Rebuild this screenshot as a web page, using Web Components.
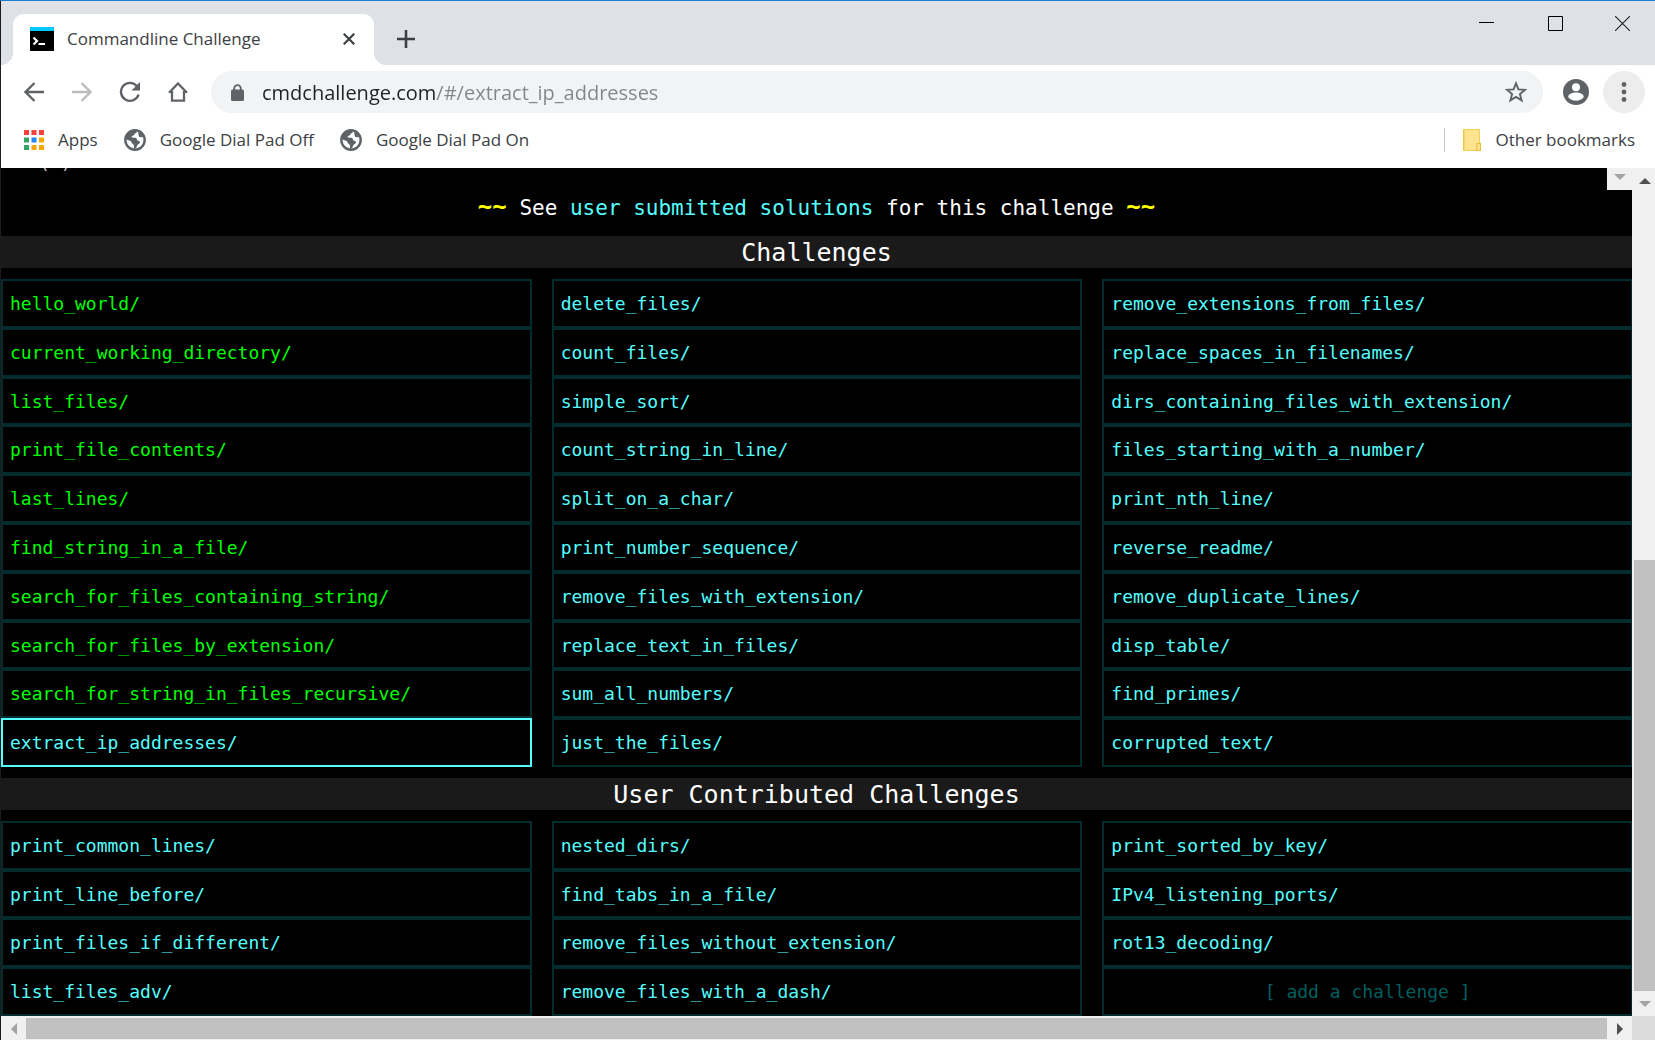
<!DOCTYPE html>
<html lang="en">
<head>
<meta charset="utf-8">
<title>Commandline Challenge</title>
<style>
  html, body { height: 100%; margin: 0; }
  body { font-family: "Open Sans", "Noto Sans", sans-serif; font-size: 18px; color: #3c4043; overflow: hidden; }
</style>
</head>
<body>
<browser-window>
  <tab-strip slot="tabs"><browser-tab>Commandline Challenge</browser-tab></tab-strip>
  <nav-toolbar slot="toolbar"></nav-toolbar>
  <bookmarks-bar slot="bookmarks">
    <bookmark-item icon="apps">Apps</bookmark-item>
    <bookmark-item icon="globe">Google Dial Pad Off</bookmark-item>
    <bookmark-item icon="globe">Google Dial Pad On</bookmark-item>
    <bookmark-item icon="folder" slot="end">Other bookmarks</bookmark-item>
  </bookmarks-bar>
  <challenge-page>
    <solutions-note slot="note"></solutions-note>
    <section-title>Challenges</section-title>
    <challenge-list rows="10">
      <challenge-link done>hello_world/</challenge-link>
      <challenge-link done>current_working_directory/</challenge-link>
      <challenge-link done>list_files/</challenge-link>
      <challenge-link done>print_file_contents/</challenge-link>
      <challenge-link done>last_lines/</challenge-link>
      <challenge-link done>find_string_in_a_file/</challenge-link>
      <challenge-link done>search_for_files_containing_string/</challenge-link>
      <challenge-link done>search_for_files_by_extension/</challenge-link>
      <challenge-link done>search_for_string_in_files_recursive/</challenge-link>
      <challenge-link current>extract_ip_addresses/</challenge-link>
      <challenge-link>delete_files/</challenge-link>
      <challenge-link>count_files/</challenge-link>
      <challenge-link>simple_sort/</challenge-link>
      <challenge-link>count_string_in_line/</challenge-link>
      <challenge-link>split_on_a_char/</challenge-link>
      <challenge-link>print_number_sequence/</challenge-link>
      <challenge-link>remove_files_with_extension/</challenge-link>
      <challenge-link>replace_text_in_files/</challenge-link>
      <challenge-link>sum_all_numbers/</challenge-link>
      <challenge-link>just_the_files/</challenge-link>
      <challenge-link>remove_extensions_from_files/</challenge-link>
      <challenge-link>replace_spaces_in_filenames/</challenge-link>
      <challenge-link>dirs_containing_files_with_extension/</challenge-link>
      <challenge-link>files_starting_with_a_number/</challenge-link>
      <challenge-link>print_nth_line/</challenge-link>
      <challenge-link>reverse_readme/</challenge-link>
      <challenge-link>remove_duplicate_lines/</challenge-link>
      <challenge-link>disp_table/</challenge-link>
      <challenge-link>find_primes/</challenge-link>
      <challenge-link>corrupted_text/</challenge-link>
    </challenge-list>
    <section-title>User Contributed Challenges</section-title>
    <challenge-list rows="4">
      <challenge-link>print_common_lines/</challenge-link>
      <challenge-link>print_line_before/</challenge-link>
      <challenge-link>print_files_if_different/</challenge-link>
      <challenge-link>list_files_adv/</challenge-link>
      <challenge-link>nested_dirs/</challenge-link>
      <challenge-link>find_tabs_in_a_file/</challenge-link>
      <challenge-link>remove_files_without_extension/</challenge-link>
      <challenge-link>remove_files_with_a_dash/</challenge-link>
      <challenge-link>print_sorted_by_key/</challenge-link>
      <challenge-link>IPv4_listening_ports/</challenge-link>
      <challenge-link>rot13_decoding/</challenge-link>
      <challenge-link add>[ add a challenge ]</challenge-link>
    </challenge-list>
  </challenge-page>
</browser-window>

<script>
const define = (name, html, setup) => customElements.define(name, class extends HTMLElement {
  constructor() {
    super();
    const t = document.createElement('template');
    t.innerHTML = '<style>*{box-sizing:border-box}button{font:inherit;border:0;padding:0;margin:0;background:none;color:inherit;display:grid;place-items:center}svg{display:block}</style>' + html;
    this.attachShadow({ mode: 'open' }).append(t.content.cloneNode(true));
  }
  connectedCallback() { if (setup) setup(this, this.shadowRoot); }
});

define('browser-window', `
  <style>
    :host { display: flex; flex-direction: column; height: 100vh; box-sizing: border-box;
      border-top: 1px solid #1a7fd4; border-left: 1px solid #1c1c1c; background: #fff; }
    main { flex: 1; min-height: 0; display: grid; grid-template-columns: minmax(0, 1fr) 23px;
      grid-template-rows: minmax(0, 1fr) 24px; background: #dcdcdc; position: relative; }
    .corner { position: absolute; top: 0; right: 23px; width: 25px; height: 22px; padding-bottom: 4px; background: #f0f0f0; display: grid; place-items: center; }
  </style>
  <slot name="tabs"></slot>
  <slot name="toolbar"></slot>
  <slot name="bookmarks"></slot>
  <main>
    <slot></slot>
    <scroll-rail></scroll-rail>
    <scroll-rail horizontal></scroll-rail>
    <div class="corner"><svg width="12" height="6" viewBox="0 0 12 6"><path d="M0 0h12L6 6z" fill="#a3a3a3"/></svg></div>
  </main>`);

define('tab-strip', `
  <style>
    :host { display: flex; align-items: flex-end; height: 64px; background: #dee1e6; flex: none; padding-left: 12px; box-sizing: border-box; }
    .new { width: 64px; height: 51px; padding-bottom: 2px; }
    .controls { margin-left: auto; align-self: flex-start; display: flex; }
    .controls button { width: 69px; height: 44px; }
    .controls button:last-child { width: 65px; }
  </style>
  <slot></slot>
  <button class="new" aria-label="New tab"><svg width="18" height="18" viewBox="0 0 18 18"><path d="M9 0v18M0 9h18" stroke="#3c4043" stroke-width="2.6"/></svg></button>
  <div class="controls">
    <button aria-label="Minimize"><svg width="15" height="15" viewBox="0 0 15 15"><path d="M0 6.5h15" stroke="#000"/></svg></button>
    <button aria-label="Maximize"><svg width="15" height="15" viewBox="0 0 15 15"><path d="M.5.5h14v14H.5z" fill="none" stroke="#000"/></svg></button>
    <button aria-label="Close"><svg width="15" height="15" viewBox="0 0 15 15"><path d="M0 0l15 15M15 0L0 15" stroke="#222" stroke-width="1.1"/></svg></button>
  </div>`);

define('browser-tab', `
  <style>
    :host { display: flex; align-items: center; position: relative; width: 361px; height: 51px; box-sizing: border-box;
      padding: 0 14px 2px 17px; background: #fff; border-radius: 11px 11px 0 0; }
    :host::before, :host::after { content: ""; position: absolute; bottom: 0; width: 12px; height: 12px; }
    :host::before { left: -12px; background: radial-gradient(circle at 0 0, transparent 12px, #fff 12px); }
    :host::after { right: -12px; background: radial-gradient(circle at 100% 0, transparent 12px, #fff 12px); }
    span { flex: 1; margin-left: 13px; white-space: nowrap; font-size: 17px; }
    button { width: 22px; height: 22px; }
  </style>
  <svg width="24" height="24" viewBox="0 0 24 24"><path d="M0 0h24v24H0z"/><path d="M0 0h24v4H0z" fill="#00c8ff"/><path d="M3.500 10.500l3.500 3.500-3.500 3.500M8.500 17h6.500" fill="none" stroke="#fff" stroke-width="2.200"/></svg>
  <span><slot></slot></span>
  <button aria-label="Close tab"><svg width="12" height="12" viewBox="0 0 12 12"><path d="M.7.700l10.600 10.600M11.300.700L.7 11.300" stroke="#3c4043" stroke-width="2.200"/></svg></button>`);

define('nav-toolbar', `
  <style>
    :host { display: flex; align-items: center; height: 54px; flex: none; padding: 0 10px 0 9px; background: #fff; box-sizing: border-box; }
    button { width: 48px; height: 42px; }
    .omni { flex: 1; display: flex; align-items: center; height: 42px; border-radius: 21px; background: #f1f3f4; padding-left: 20px; margin: 0 9px; }
    input { flex: 1; min-width: 0; border: 0; outline: 0; padding: 0; height: 42px; margin-left: 18px; font: inherit; font-size: 20px; color: #202124;
      background: linear-gradient(90deg, #202124 173px, #80868b 173px); -webkit-background-clip: text; background-clip: text; -webkit-text-fill-color: transparent; }
    .star { width: 54px; }
    .user { width: 48px; }
    .menu { width: 42px; border-radius: 50%; background: #ededed; margin-left: 3px; }
  </style>
  <button aria-label="Back"><svg width="20" height="20" viewBox="0 0 20 20"><path d="M10.500 1L1.500 10l9 9M1.500 10H20" fill="none" stroke="#5f6368" stroke-width="2.300"/></svg></button>
  <button aria-label="Forward"><svg width="20" height="20" viewBox="0 0 20 20"><path d="M9.500 1l9 9-9 9M18.500 10H0" fill="none" stroke="#babcbe" stroke-width="2.300"/></svg></button>
  <button aria-label="Reload"><svg width="22" height="22" viewBox="0 0 22 22"><path d="M18 5.200A9 9 0 1 0 19.600 13.500" fill="none" stroke="#5f6368" stroke-width="2.400"/><path d="M21 1v8.500h-8.500z" fill="#5f6368"/></svg></button>
  <button aria-label="Home"><svg width="20" height="20" viewBox="0 0 20 20"><path d="M1 10.800L10 1.500l9 9.300M4 9v9.700h12V9" fill="none" stroke="#5f6368" stroke-width="2.300"/></svg></button>
  <div class="omni">
    <svg width="13" height="17" viewBox="0 0 13 17"><path d="M3.200 7V4.500a3.300 3.300 0 0 1 6.600 0V7" fill="none" stroke="#5f6368" stroke-width="1.800"/><rect y="5.500" width="13" height="11.500" rx="1.500" fill="#5f6368"/></svg>
    <input aria-label="Address" value="cmdchallenge.com/#/extract_ip_addresses" spellcheck="false">
    <button class="star" aria-label="Bookmark this page"><svg width="22" height="22" viewBox="0 0 24 24"><path d="M12 2.500l2.700 6.600 7.100.500-5.500 4.600 1.800 7-6.100-3.800-6.100 3.800 1.800-7-5.500-4.600 7.100-.500z" fill="none" stroke="#5f6368" stroke-width="2.100"/></svg></button>
  </div>
  <button class="user" aria-label="Profile"><svg width="26" height="26" viewBox="0 0 26 26"><circle cx="13" cy="13" r="13" fill="#5f6368"/><circle cx="13" cy="8.200" r="4" fill="#fff"/><path d="M5.200 18c0-6 15.600-6 15.600 0-3.600 5-12 5-15.600 0z" fill="#fff"/></svg></button>
  <button class="menu" aria-label="Menu"><svg width="6" height="20" viewBox="0 0 6 20"><g fill="#5f6368"><circle cx="3" cy="2.500" r="2.400"/><circle cx="3" cy="10" r="2.400"/><circle cx="3" cy="17.500" r="2.400"/></g></svg></button>`);

define('bookmarks-bar', `
  <style>
    :host { display: flex; align-items: center; height: 49px; flex: none; gap: 26px; padding: 0 20px 8px 23px; background: #fff; box-sizing: border-box; }
    .end { margin-left: auto; padding-left: 18px; border-left: 1px solid #c6c9cd; height: 24px; display: flex; align-items: center; }
  </style>
  <slot></slot>
  <div class="end"><slot name="end"></slot></div>`);

const bookmarkIcons = {
  apps: '<svg width="20" height="20" viewBox="0 0 20 20"><path d="M0 0h5v5H0zM7.500 0h5v5h-5zM15 0h5v5h-5z" fill="#f9423a"/><path d="M0 7.500h5v5H0zM0 15h5v5H0z" fill="#34a464"/><path d="M7.500 7.500h5v5h-5z" fill="#2388f5"/><path d="M15 7.500h5v5h-5zM7.500 15h5v5h-5zM15 15h5v5h-5z" fill="#f5a70b"/></svg>',
  globe: '<svg width="22" height="22" viewBox="0 0 22 22"><circle cx="11" cy="11" r="9.700" fill="#fff" stroke="#5f6368" stroke-width="2.400"/><path d="M1.500 10C2 5 6 1 12.500 1.500c.8 1.500-.2 2.600-1.500 3-1 .4-.5 1.600-1.600 2-.8.400-1.900.3-1.800 1.300.1 1.400 2.900.5 4.400 1.300 1.300.7.700 2.500 2 2.700 1.500.2 2.400.8 1.900 2-.5 1.400-2.200 1.300-2.700 2.700-.4 1.500-1 2.800-2.300 3.500-1.500-.5-.5-2.500-1.100-4-.5-1.200-2.300-1.500-2.500-3C7.100 11.500 4 11.500 1.500 10z" fill="#5f6368"/><path d="M14.500 3c-1 1.500.3 2.100.2 3.300-.1 1.300 1 2.100 2.300 1.900 1-.2 2-.2 3.200.8L18 4z" fill="#5f6368"/></svg>',
  folder: '<svg width="18" height="22" viewBox="0 0 18 22"><path d="M.5.500h16v13.500h1v7.500H.5z" fill="#ffe48f" stroke="#f2cf55"/><path d="M.8 1v20" stroke="#efc63f" stroke-width="1.500"/><path d="M13.800 14.500h3.700v7h-3.700z" fill="#ffe082" stroke="#e6bd3c"/></svg>'
};
define('bookmark-item', `
  <style>
    :host { display: block; }
    a { display: flex; align-items: center; gap: 14px; color: #3c4043; text-decoration: none; font-size: 17px; line-height: 24px; white-space: nowrap; }
  </style>
  <a href="#"><slot></slot></a>`, (el, root) => {
  const a = root.querySelector('a');
  if (!a.querySelector('svg')) a.insertAdjacentHTML('afterbegin', bookmarkIcons[el.getAttribute('icon')]);
});

define('challenge-page', `
  <style>
    :host { display: flex; flex-direction: column; gap: 11px; min-width: 0; overflow: hidden; background: #000; color: #fff;
      font-family: "DejaVu Sans Mono", "Liberation Mono", monospace; }
    .top { display: flex; flex-direction: column; height: 68px; flex: none; margin-bottom: -11px; }
    .prompt { height: 4px; overflow: hidden; display: flex; align-items: flex-end; padding-left: 38px; font-size: 18px; line-height: 18px; white-space: pre; color: #ccc; }
  </style>
  <div class="top"><div class="prompt">( )</div><slot name="note"></slot></div>
  <slot></slot>`);

define('solutions-note', `
  <style>
    :host { display: block; flex: 1; text-align: center; font-size: 21px; line-height: 72px; height: 64px; white-space: nowrap; }
    b { font-weight: 700; font-size: 24px; line-height: 1; color: #ff0; }
    a { color: #5ff; text-decoration: none; }
  </style>
  <b>~~</b> See <a href="#">user submitted solutions</a> for this challenge <b>~~</b>`);

define('section-title', `
  <style>
    :host { display: block; flex: none; height: 32px; background: #1a1a1a; }
    h2 { margin: 0; font-size: 25px; font-weight: 400; line-height: 34px; text-align: center; }
  </style>
  <h2><slot></slot></h2>`);

define('challenge-list', `
  <style>
    :host { display: grid; grid-auto-flow: column; grid-auto-columns: minmax(0, 1fr); column-gap: 20px; min-height: 0; margin-right: -1px; }
  </style>
  <slot></slot>`, el => {
  const rows = el.getAttribute('rows');
  el.style.gridTemplateRows = 'repeat(' + rows + ', minmax(0, 1fr))';
  el.style.flex = rows + ' 1 0';
});

define('challenge-link', `
  <style>
    :host { display: grid; --tone: #5ff; --edge: #022c2d; }
    :host([done]) { --tone: #0f0; }
    :host([current]) { --edge: #5ff; }
    :host([add]) { --tone: #005f5f; text-align: center; }
    a { display: block; border: 2px solid var(--edge); padding: 0 7px; font-size: 18px; line-height: 45px; color: var(--tone); text-decoration: none; white-space: nowrap; overflow: hidden; }
  </style>
  <a href="#"><slot></slot></a>`);

define('scroll-rail', `
  <style>
    :host { display: flex; flex-direction: column; background: #f0f0f0; padding-left: 2px; }
    :host([horizontal]) { flex-direction: row; padding: 2px 0 1px; }
    button { flex: none; height: 25px; }
    :host([horizontal]) button { width: 25px; height: auto; }
    .track { flex: 1; display: flex; flex-direction: column; justify-content: flex-end; }
    .thumb { background: #c1c1c1; height: 54%; }
    :host([horizontal]) .thumb { height: 100%; }
  </style>
  <button class="back" aria-label="Scroll back"></button>
  <div class="track"><div class="thumb"></div></div>
  <button class="fwd" aria-label="Scroll forward"></button>`, (el, root) => {
  const h = el.hasAttribute('horizontal');
  const tri = (d, c, w, t) => '<svg width="' + w + '" height="' + t + '"><path d="' + d + '" fill="' + c + '"/></svg>';
  root.querySelector('.back').innerHTML = h ? tri('M6 0v12L0 6z', '#a3a3a3', 6, 12) : tri('M0 6h12L6 0z', '#505050', 12, 6);
  root.querySelector('.fwd').innerHTML = h ? tri('M0 0v12l6-6z', '#505050', 6, 12) : tri('M0 0h12L6 6z', '#a3a3a3', 12, 6);
});
</script>
</body>
</html>
